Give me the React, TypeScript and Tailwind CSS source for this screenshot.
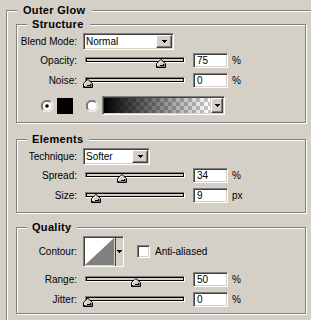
import React from "react";

const sunken =
  "border border-t-[#808080] border-l-[#808080] border-b-white border-r-white shadow-[inset_1px_1px_0_#404040,inset_-1px_-1px_0_#d4d0c8]";

function Group({
  title,
  className,
  children,
  outer,
}: {
  title: string;
  className?: string;
  children?: React.ReactNode;
  outer?: boolean;
}) {
  return (
    <div
      className={`relative border border-[#808080] shadow-[inset_1px_1px_0_#fff,1px_1px_0_#fff] ${className ?? ""}`}
    >
      <div
        className={`absolute top-[-7px] left-[10px] bg-[#d4d0c8] ${outer ? "pl-[6px] pr-[7px]" : "pl-[5px] pr-[6px]"} text-[11px] leading-[13px] font-bold tracking-[0.3px] text-black whitespace-nowrap`}
      >
        {title}
      </div>
      {children}
    </div>
  );
}

function DropBtn({ className }: { className?: string }) {
  return (
    <div
      className={`flex items-center justify-center bg-[#d4d0c8] border border-t-white border-l-white border-b-[#404040] border-r-[#404040] shadow-[inset_-1px_-1px_0_#808080] ${className ?? ""}`}
    >
      <svg width="5" height="3" viewBox="0 0 5 3" shapeRendering="crispEdges">
        <path d="M0 0h5v1H0zM1 1h3v1H1zM2 2h1v1H2z" fill="#000" />
      </svg>
    </div>
  );
}

function Select({ value, width }: { value: string; width: string }) {
  return (
    <div className={`flex items-stretch h-[17px] bg-white ${sunken} ${width}`}>
      <div className="flex-1 flex items-center pl-[2px] text-[10px] leading-none text-black">
        {value}
      </div>
      <DropBtn className="w-[16px] m-[1px]" />
    </div>
  );
}

function Slider({ value }: { value: number }) {
  const left = 1 + value * 0.98 - 4.5 + 1;
  return (
    <div className="relative w-[100px] h-[15px] ml-[8px]">
      <div className="absolute top-[4px] left-0 w-[100px] h-[6px] bg-[#d4d0c8] border border-t-[#808080] border-l-[#808080] border-b-white border-r-white shadow-[inset_1px_1px_0_#000,inset_-1px_-1px_0_#000]" />
      <svg
        className="absolute top-[6px]"
        style={{ left: `${left}px` }}
        width="10"
        height="9"
        viewBox="0 0 10 9"
        shapeRendering="crispEdges"
      >
        <path d="M5 0.5 L9.5 4.5 V8.5 H0.5 V4.5 Z" fill="#d4d0c8" stroke="#000" strokeWidth="1" shapeRendering="auto" />
        <path d="M1.5 4.8 L5 1.7" stroke="#fff" strokeWidth="1" shapeRendering="auto" />
        <path d="M1.5 5 V7.5" stroke="#fff" strokeWidth="1" />
        <path d="M1.5 7.5 H8.5 V5" stroke="#808080" strokeWidth="1" />
      </svg>
    </div>
  );
}

function NumInput({ value }: { value: string }) {
  return (
    <div
      className={`ml-[8px] w-[35px] h-[15px] bg-white flex items-center pl-[3px] text-[10px] leading-none text-black ${sunken}`}
    >
      {value}
    </div>
  );
}

function Label({ children }: { children: React.ReactNode }) {
  return (
    <div className="w-[60px] text-right text-[10px] leading-none text-black whitespace-nowrap">
      {children}
    </div>
  );
}

function SliderRow({
  label,
  value,
  text,
  unit,
  className,
}: {
  label: string;
  value: number;
  text: string;
  unit: string;
  className?: string;
}) {
  return (
    <div className={`flex items-center h-[15px] ${className ?? ""}`}>
      <Label>{label}</Label>
      <Slider value={value} />
      <NumInput value={text} />
      <span className="ml-[4px] text-[10px] leading-none text-black">{unit}</span>
    </div>
  );
}

function Radio({ checked }: { checked?: boolean }) {
  return (
    <svg width="12" height="12" viewBox="0 0 12 12">
      <circle cx="6" cy="6" r="5.5" fill="#fff" />
      <path d="M1.8 10.2 A5.5 5.5 0 0 1 10.2 1.8" stroke="#808080" fill="none" />
      <path d="M2.5 9.5 A4.5 4.5 0 0 1 9.5 2.5" stroke="#404040" fill="none" />
      <path d="M1.8 10.2 A5.5 5.5 0 0 0 10.2 1.8" stroke="#fff" fill="none" />
      <path d="M2.5 9.5 A4.5 4.5 0 0 0 9.5 2.5" stroke="#d4d0c8" fill="none" />
      {checked && <circle cx="6" cy="6" r="1.8" fill="#000" />}
    </svg>
  );
}

export default function App() {
  return (
    <div className="w-[311px] h-[320px] overflow-hidden bg-[#d4d0c8] font-['Liberation_Sans',Arial,sans-serif]">
      <Group title="Outer Glow" outer className="mt-[10px] ml-[6px] w-[330px] h-[340px]">
        <div className="flex flex-col">
          <Group title="Structure" className="mt-[13px] ml-[9px] w-[290px] h-[99px]">
            <div className="flex flex-col pt-[8px]">
              <div className="flex items-center h-[17px]">
                <Label>Blend Mode:</Label>
                <div className="ml-[6px]">
                  <Select value="Normal" width="w-[91px]" />
                </div>
              </div>
              <SliderRow className="mt-[3px]" label="Opacity:" value={75} text="75" unit="%" />
              <SliderRow className="mt-[5px]" label="Noise:" value={0} text="0" unit="%" />
              <div className="flex items-center h-[19px] mt-[8px]">
                <div className="ml-[24px]">
                  <Radio checked />
                </div>
                <div className="ml-[4px] w-[16px] h-[16px] bg-black" />
                <div className="ml-[13px]">
                  <Radio />
                </div>
                <div className={`ml-[4px] w-[123px] h-[19px] flex items-stretch ${sunken}`}>
                  <div className="flex-1 m-[1px] [background-image:linear-gradient(to_right,#000,rgba(0,0,0,0)),repeating-conic-gradient(#c8c8c8_0_25%,#fff_0_50%)] [background-size:100%_100%,8px_8px]" />
                  <DropBtn className="w-[12px] my-[1px] mr-[1px]" />
                </div>
              </div>
            </div>
          </Group>

          <Group title="Elements" className="mt-[16px] ml-[9px] w-[290px] h-[74px]">
            <div className="flex flex-col pt-[8px]">
              <div className="flex items-center h-[17px]">
                <Label>Technique:</Label>
                <div className="ml-[6px]">
                  <Select value="Softer" width="w-[67px]" />
                </div>
              </div>
              <SliderRow className="mt-[3px]" label="Spread:" value={35} text="34" unit="%" />
              <SliderRow className="mt-[5px]" label="Size:" value={9} text="9" unit="px" />
            </div>
          </Group>

          <Group title="Quality" className="mt-[14px] ml-[9px] w-[290px] h-[87px]">
            <div className="flex flex-col pt-[8px]">
              <div className="flex items-center h-[31px]">
                <Label>Contour:</Label>
                <div className={`ml-[6px] w-[41px] h-[31px] flex items-stretch bg-[#d4d0c8] ${sunken}`}>
                  <svg className="m-[1px]" width="29" height="27" viewBox="0 0 29 27" preserveAspectRatio="none">
                    <rect width="29" height="27" fill="#fff" />
                    <path d="M0 27 L29 0 V27 Z" fill="#808080" />
                  </svg>
                  <div className="flex-1 flex items-center justify-center border-l border-[#404040]">
                    <svg width="5" height="3" viewBox="0 0 5 3" shapeRendering="crispEdges">
                      <path d="M0 0h5v1H0zM1 1h3v1H1zM2 2h1v1H2z" fill="#000" />
                    </svg>
                  </div>
                </div>
                <div className={`ml-[13px] w-[13px] h-[13px] bg-white ${sunken}`} />
                <span className="ml-[5px] text-[10px] leading-none text-black">Anti-aliased</span>
              </div>
              <SliderRow className="mt-[5px]" label="Range:" value={49} text="50" unit="%" />
              <SliderRow className="mt-[5px]" label="Jitter:" value={0} text="0" unit="%" />
            </div>
          </Group>
        </div>
      </Group>
    </div>
  );
}
